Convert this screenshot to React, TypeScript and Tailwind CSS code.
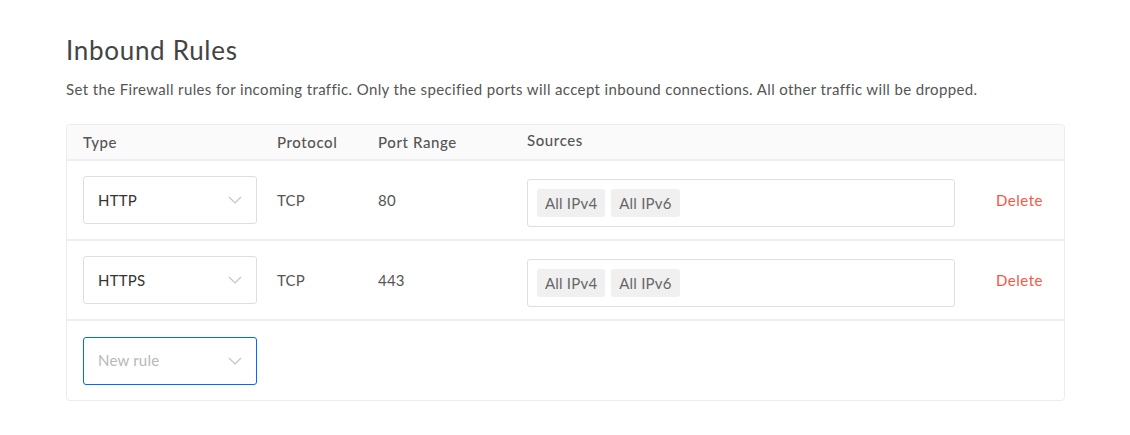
import React from "react";

type Rule = { type: string; protocol: string; port: string; sources: string[] };

const rules: Rule[] = [
  { type: "HTTP", protocol: "TCP", port: "80", sources: ["All IPv4", "All IPv6"] },
  { type: "HTTPS", protocol: "TCP", port: "443", sources: ["All IPv4", "All IPv6"] },
];

function Chevron() {
  return (
    <svg width="14" height="8" viewBox="0 0 14 8" fill="none" className="shrink-0">
      <path d="M1 1l6 6 6-6" stroke="#c4c4c4" strokeWidth="1.2" />
    </svg>
  );
}

function Select({ value, placeholder, active }: { value?: string; placeholder?: string; active?: boolean }) {
  return (
    <div
      className={
        active
          ? "flex h-[48px] w-[174px] items-center justify-between rounded-[3px] border border-[#0069ff] pl-[14px] pr-[14px]"
          : "flex h-[48px] w-[174px] items-center justify-between rounded-[3px] border border-[#dfdfdf] pl-[14px] pr-[14px]"
      }
    >
      {value ? (
        <span className="text-[15px] tracking-[0.2px] text-[#333]">{value}</span>
      ) : (
        <span className="text-[15px] tracking-[0.2px] text-[#b8b8b8]">{placeholder}</span>
      )}
      <Chevron />
    </div>
  );
}

export default function App() {
  return (
    <div className="min-h-[435px] bg-white px-[66px] pt-[34px] font-['Lato','Open_Sans',sans-serif]">
      <h1 className="text-[26px] leading-[32px] tracking-[0.7px] text-[#444]">Inbound Rules</h1>
      <p className="mt-[13px] text-[15px] leading-[20px] tracking-[0.37px] text-[#555]">
        Set the Firewall rules for incoming traffic. Only the specified ports will accept inbound connections. All other traffic will be dropped.
      </p>

      <div className="mt-[25px] w-[999px] rounded-[4px] border border-[#ececec]">
        <div className="flex h-[36px] items-center rounded-t-[4px] border-b-2 border-[#efefef] bg-[#fafafa] text-[15px] font-medium tracking-[0.6px] text-[#555]">
          <div className="w-[210px] pl-[16px] pt-[1px]">Type</div>
          <div className="w-[101px] pt-[1px]">Protocol</div>
          <div className="w-[149px] pt-[1px]">Port Range</div>
          <div className="-mt-[3px]">Sources</div>
        </div>

        {rules.map((r, i) => (
          <div key={i} className="flex h-[80px] items-center border-b-2 border-[#efefef] text-[15px] tracking-[0.2px] text-[#555]">
            <div className="w-[210px] pl-[16px]">
              <Select value={r.type} />
            </div>
            <div className="w-[101px]">{r.protocol}</div>
            <div className="w-[149px]">{r.port}</div>
            <div className="mt-[6px] flex h-[48px] w-[428px] items-center gap-[6px] rounded-[3px] border border-[#dfdfdf] px-[9px]">
              {r.sources.map((s) => (
                <span key={s} className="flex h-[28px] items-center rounded-[3px] bg-[#f0f0f0] px-[8px] text-[15px] tracking-[0.2px] text-[#666]">
                  {s}
                </span>
              ))}
            </div>
            <div className="ml-[41px] text-[15px] tracking-[0.5px] text-[#f25a3f]">Delete</div>
          </div>
        ))}

        <div className="flex h-[79px] items-center">
          <div className="pl-[16px]">
            <Select placeholder="New rule" active />
          </div>
        </div>
      </div>
    </div>
  );
}
